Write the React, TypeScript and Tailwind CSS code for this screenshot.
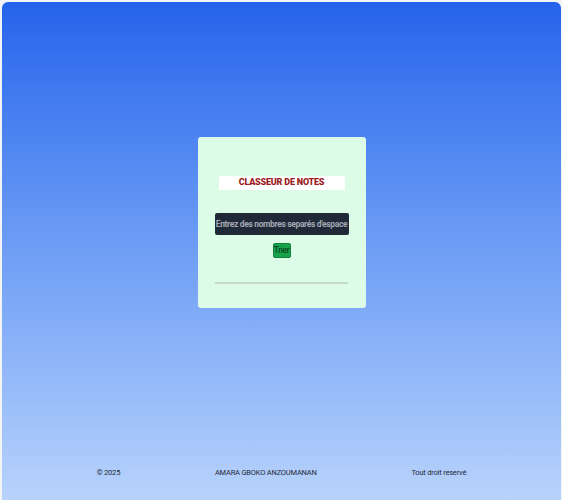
const App = () => {
  return (
    <div className="min-h-screen bg-gray-100 pl-[2px] pt-[2px] font-['Roboto',sans-serif]">
      <div className="mr-[1px] flex h-[510px] flex-col rounded-md bg-gradient-to-b from-[#2563eb] to-[#bcd5fb]">
        <main className="flex h-[441px] items-center justify-center">
          <div className="flex h-[171px] w-[168px] flex-col items-center rounded-[3px] bg-[#dcfce7] pt-[39px]">
            <h1 className="flex h-[14px] w-[126px] items-center justify-center bg-white text-[9px] font-black tracking-[-0.2px] text-[#9b1c1c]">
              CLASSEUR DE NOTES
            </h1>
            <input
              type="text"
              placeholder="Entrez des nombres separés d'espace"
              className="mt-[23px] h-[22px] w-[134px] rounded-[2px] bg-[#1f2937] px-0 text-center text-[8.5px] font-bold tracking-[-0.35px] text-gray-200 outline-none placeholder:text-[#a3a8b3]"
            />
            <button
              type="button"
              className="mt-[8px] flex h-[15px] w-[18px] items-center justify-center rounded-[2px] border border-[#15803d] bg-[#16a34a] text-[8.5px] leading-none tracking-[-0.3px] text-[#052e16]"
            >
              Trier
            </button>
            <div className="mt-[24px] h-[2px] w-[133px] bg-[#c6d9cc]" />
          </div>
        </main>
        <footer className="flex h-[60px] items-center justify-evenly text-[7.5px] tracking-[-0.2px] text-[#1f2937]">
          <span>© 2025</span>
          <span>AMARA GBOKO ANZOUMANAN</span>
          <span>Tout droit reservé</span>
        </footer>
      </div>
    </div>
  );
};

export default App;
